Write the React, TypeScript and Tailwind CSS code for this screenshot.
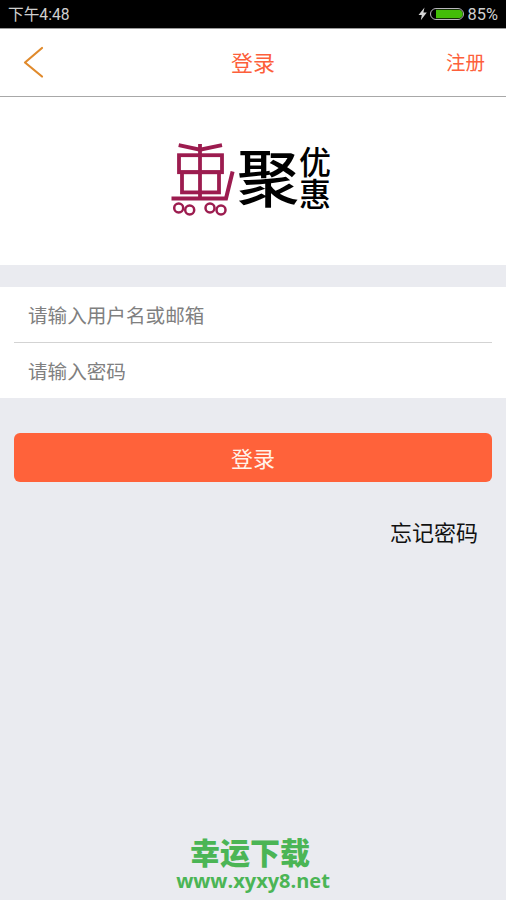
function BackIcon() {
  return (
    <svg width="22" height="34" viewBox="0 0 22 34" fill="none" stroke="#e08a2c" strokeWidth="2.2" strokeLinecap="round" strokeLinejoin="round">
      <path d="M19 3 L2 17.5 L19 31.5" />
    </svg>
  );
}

function Battery() {
  return (
    <svg width="46" height="14" viewBox="0 0 46 14" fill="none">
      <path d="M6.5 0.5 L0.5 8 H3.8 L2.8 13.3 L8.8 5.4 H5.4 Z" fill="#d6d6d6" />
      <rect x="12.5" y="1.5" width="33" height="11" rx="5.5" stroke="#b9b5bd" />
      <path d="M18 2.7 H40.5 A4.3 4.3 0 0 1 40.5 11.3 H18 Z" fill="#43bd08" />
    </svg>
  );
}

function CartLogo() {
  return (
    <svg width="66" height="76" viewBox="0 0 66 76" fill="none" stroke="#9c1c4f" strokeWidth="3.8">
      <path d="M7.7 5.2 L29 9.7 L51 5.2" />
      <path d="M29 4 V57" />
      <rect x="8" y="15.2" width="43" height="17" />
      <rect x="11" y="32.2" width="37" height="20.2" />
      <path d="M0.5 58.4 H55 L61.6 31.5" strokeWidth="4" />
      <g strokeWidth="2.5">
        <circle cx="7.7" cy="68" r="4.5" />
        <circle cx="18.7" cy="70" r="4.5" />
        <circle cx="39" cy="68" r="4.5" />
        <circle cx="50" cy="70" r="4.5" />
      </g>
    </svg>
  );
}

export default function App() {
  return (
    <div className="flex h-[900px] w-[506px] flex-col overflow-hidden bg-[#eaebf0] font-['Noto_Sans_CJK_SC',sans-serif]">
      <div className="flex h-7 shrink-0 items-center justify-between bg-black pr-2 pl-2 text-[#d0d0d0]">
        <span className="pt-px text-[15.7px] leading-7 font-['Roboto','Noto_Sans_CJK_SC',sans-serif]">下午4:48</span>
        <div className="flex items-center gap-1">
          <Battery />
          <span className="pt-px text-[16.4px] leading-7 font-['Roboto',sans-serif]">85%</span>
        </div>
      </div>

      <header className="grid h-[69px] shrink-0 grid-cols-3 items-center border-t border-b border-t-[#9b9b9b] border-b-[#a8a8a8] bg-white pr-[21px] pb-[3px] pl-[22px] text-[#fd5f3b]">
        <button className="ml-px justify-self-start pt-0.5" aria-label="返回">
          <BackIcon />
        </button>
        <h1 className="pr-px text-center text-[22px] leading-8">登录</h1>
        <button className="justify-self-end pt-px text-[19.5px] leading-8">注册</button>
      </header>

      <div className="flex h-[168px] shrink-0 items-start bg-white pt-[41px] pl-[171px] text-black">
        <CartLogoFrame />
        <span className="mt-[2px] w-[62px] text-[62px] leading-[70px] font-medium">聚</span>
        <div className="mt-[6px] flex flex-col text-[32px] leading-8 font-medium">
          <span>优</span>
          <span>惠</span>
        </div>
      </div>

      <form className="mt-[22px] flex h-[111px] shrink-0 flex-col bg-white px-3.5">
        <input
          type="text"
          placeholder="请输入用户名或邮箱"
          className="h-14 border-b border-[#d3d3d3] px-3.5 text-[19.6px] outline-none placeholder:text-[#808080]"
        />
        <input
          type="password"
          placeholder="请输入密码"
          className="h-[55px] px-3.5 text-[19.6px] outline-none placeholder:text-[#808080]"
        />
      </form>

      <button className="mx-3.5 mt-[35px] h-[49px] shrink-0 rounded-md bg-[#ff623a] text-[22px] text-[#fff3ea]">登录</button>
      <a className="mt-[33px] mr-7 self-end text-[22px] leading-8 text-[#111]">忘记密码</a>

      <footer className="mt-auto flex flex-col items-center pb-1.5 text-[#4bb555]">
        <span className="mr-1.5 text-[30px] leading-[33px] font-black">幸运下载</span>
        <span className="text-[20px] leading-[26px] font-bold font-['Open_Sans',sans-serif]">www.xyxy8.net</span>
      </footer>
    </div>
  );
}

function CartLogoFrame() {
  return (
    <div className="mt-0.5">
      <CartLogo />
    </div>
  );
}
